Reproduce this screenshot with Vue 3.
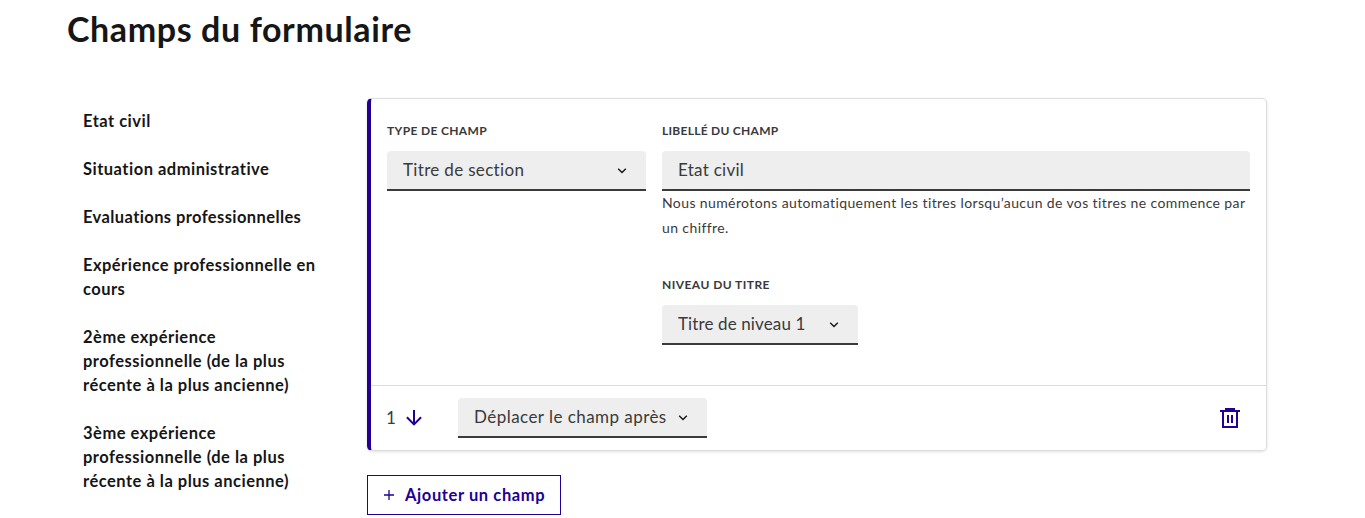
<script setup>
const sections = [
  { text: 'Etat civil', cls: 's1' },
  { text: 'Situation administrative', cls: 's2' },
  { text: 'Evaluations professionnelles', cls: 's3' },
  { text: 'Expérience professionnelle en cours', cls: 's4' },
  { text: '2ème expérience professionnelle (de la plus récente à la plus ancienne)', cls: 's5' },
  { text: '3ème expérience professionnelle (de la plus récente à la plus ancienne)', cls: 's5' },
]
</script>

<template>
  <main class="page">
    <h1>Champs du formulaire</h1>
    <div class="layout">
      <nav class="summary">
        <a v-for="section in sections" :key="section.text" :class="section.cls">{{ section.text }}</a>
      </nav>
      <div class="editor">
        <section class="card">
          <div class="fields">
            <div class="type-col">
              <label class="l-type">Type de champ</label>
              <div class="control select">
                <span class="v-type">Titre de section</span>
                <svg class="chevron" viewBox="0 0 16 16"><path d="M4.2 6.7 8 10.5l3.8-3.8" /></svg>
              </div>
            </div>
            <div class="label-col">
              <label class="l-label">Libellé du champ</label>
              <div class="control"><span class="v-label">Etat civil</span></div>
              <p class="hint">Nous numérotons automatiquement les titres lorsqu’aucun de vos titres ne commence par un chiffre.</p>
              <label class="l-level">Niveau du titre</label>
              <div class="control select level">
                <span class="v-level">Titre de niveau 1</span>
                <svg class="chevron" viewBox="0 0 16 16"><path d="M4.2 6.7 8 10.5l3.8-3.8" /></svg>
              </div>
            </div>
          </div>
          <div class="actions">
            <span class="position">1</span>
            <svg class="down" viewBox="0 0 24 24"><path d="M12 4v14M4.9 11.3 12 18.4l7.1-7.1" /></svg>
            <div class="control select move">
              <span class="v-move">Déplacer le champ après</span>
              <svg class="chevron" viewBox="0 0 16 16"><path d="M4.2 6.7 8 10.5l3.8-3.8" /></svg>
            </div>
            <svg class="trash" viewBox="0 0 20 20">
              <path d="M5 0h10v2h5v2h-2v16H2V4H0V2h5zM4 4v14h12V4zM7 7h2v8H7zM11 7h2v8h-2z" fill-rule="evenodd" />
            </svg>
          </div>
        </section>
        <button class="add">
          <svg class="plus" viewBox="0 0 10 10"><path d="M5 0v10M0 5h10" /></svg>
          <span>Ajouter un champ</span>
        </button>
      </div>
    </div>
  </main>
</template>

<style>
body { background: #fff; overflow: hidden; }
</style>

<style scoped>
.page {
  box-sizing: border-box;
  width: 1365px;
  height: 518px;
  overflow: hidden;
  padding: 9px 98px 0 67px;
  font-family: Lato, "Open Sans", sans-serif;
  font-size: 17px;
  line-height: 24px;
  color: #3a3a3a;
}
h1 {
  margin: 0 0 49px;
  font-size: 34px;
  line-height: 40px;
  font-weight: 700;
  color: #161616;
  letter-spacing: 0.6px;
}
.layout { display: flex; }
.summary {
  box-sizing: border-box;
  width: 300px;
  padding: 11px 44px 0 16px;
  display: flex;
  flex-direction: column;
  gap: 24px;
  font-weight: 700;
  font-size: 16.5px;
  color: #161616;
  letter-spacing: 0.4px;
}
.s1, .s2 { letter-spacing: 0.49px; }
.s4 { letter-spacing: 0.46px; }
.s5 { letter-spacing: 0.5px; }
.editor { width: 900px; }
.card {
  box-sizing: border-box;
  height: 353px;
  border: 1px solid #ddd;
  border-left: 4px solid #220096;
  border-radius: 5px;
  box-shadow: 0 1px 3px rgba(0, 0, 0, 0.12);
}
.fields {
  box-sizing: border-box;
  height: 286px;
  padding: 20px 16px 0;
  display: flex;
  gap: 16px;
}
.type-col { width: 259px; }
.label-col { width: 588px; }
label {
  display: block;
  height: 24px;
  margin-bottom: 8px;
  font-size: 12px;
  font-weight: 700;
  text-transform: uppercase;
  letter-spacing: 0.45px;
}
.l-type { letter-spacing: 0.35px; }
.l-label { letter-spacing: 0.27px; }
.control {
  box-sizing: border-box;
  height: 40px;
  padding: 0 16px;
  display: flex;
  align-items: center;
  background: #eee;
  border-bottom: 2px solid #3a3a3a;
  border-radius: 4px 4px 0 0;
  white-space: nowrap;
}
.v-type { letter-spacing: 0.33px; }
.v-label { letter-spacing: 0.27px; }
.v-level { letter-spacing: 0.12px; }
.v-move { letter-spacing: 0.45px; }
.select { justify-content: space-between; }
.chevron {
  flex: none;
  width: 16px;
  height: 16px;
  fill: none;
  stroke: #161616;
  stroke-width: 1.4;
}
.hint {
  height: 51px;
  margin: -1px 0 32px;
  font-size: 14px;
  line-height: 25px;
  letter-spacing: 0.39px;
}
.level { width: 196px; }
.actions {
  box-sizing: border-box;
  height: 65px;
  padding: 0 26px 0 16px;
  display: flex;
  align-items: center;
  border-top: 1px solid #ddd;
}
.position { width: 15px; text-indent: -1px; }
.down {
  width: 24px;
  height: 24px;
  fill: none;
  stroke: #220096;
  stroke-width: 2;
}
.move { width: 249px; margin-left: 32px; }
.trash { width: 20px; height: 20px; margin-left: auto; fill: #220096; }
.add {
  box-sizing: border-box;
  width: 194px;
  height: 40px;
  margin-top: 24px;
  padding: 0 0 1px 16px;
  display: flex;
  align-items: center;
  gap: 11px;
  background: #fff;
  border: 1px solid #220096;
  color: #220096;
  font: 700 16.5px/24px Lato, sans-serif;
  letter-spacing: 0.6px;
}
.plus { width: 10px; height: 10px; stroke: #220096; stroke-width: 1.3; }
</style>
